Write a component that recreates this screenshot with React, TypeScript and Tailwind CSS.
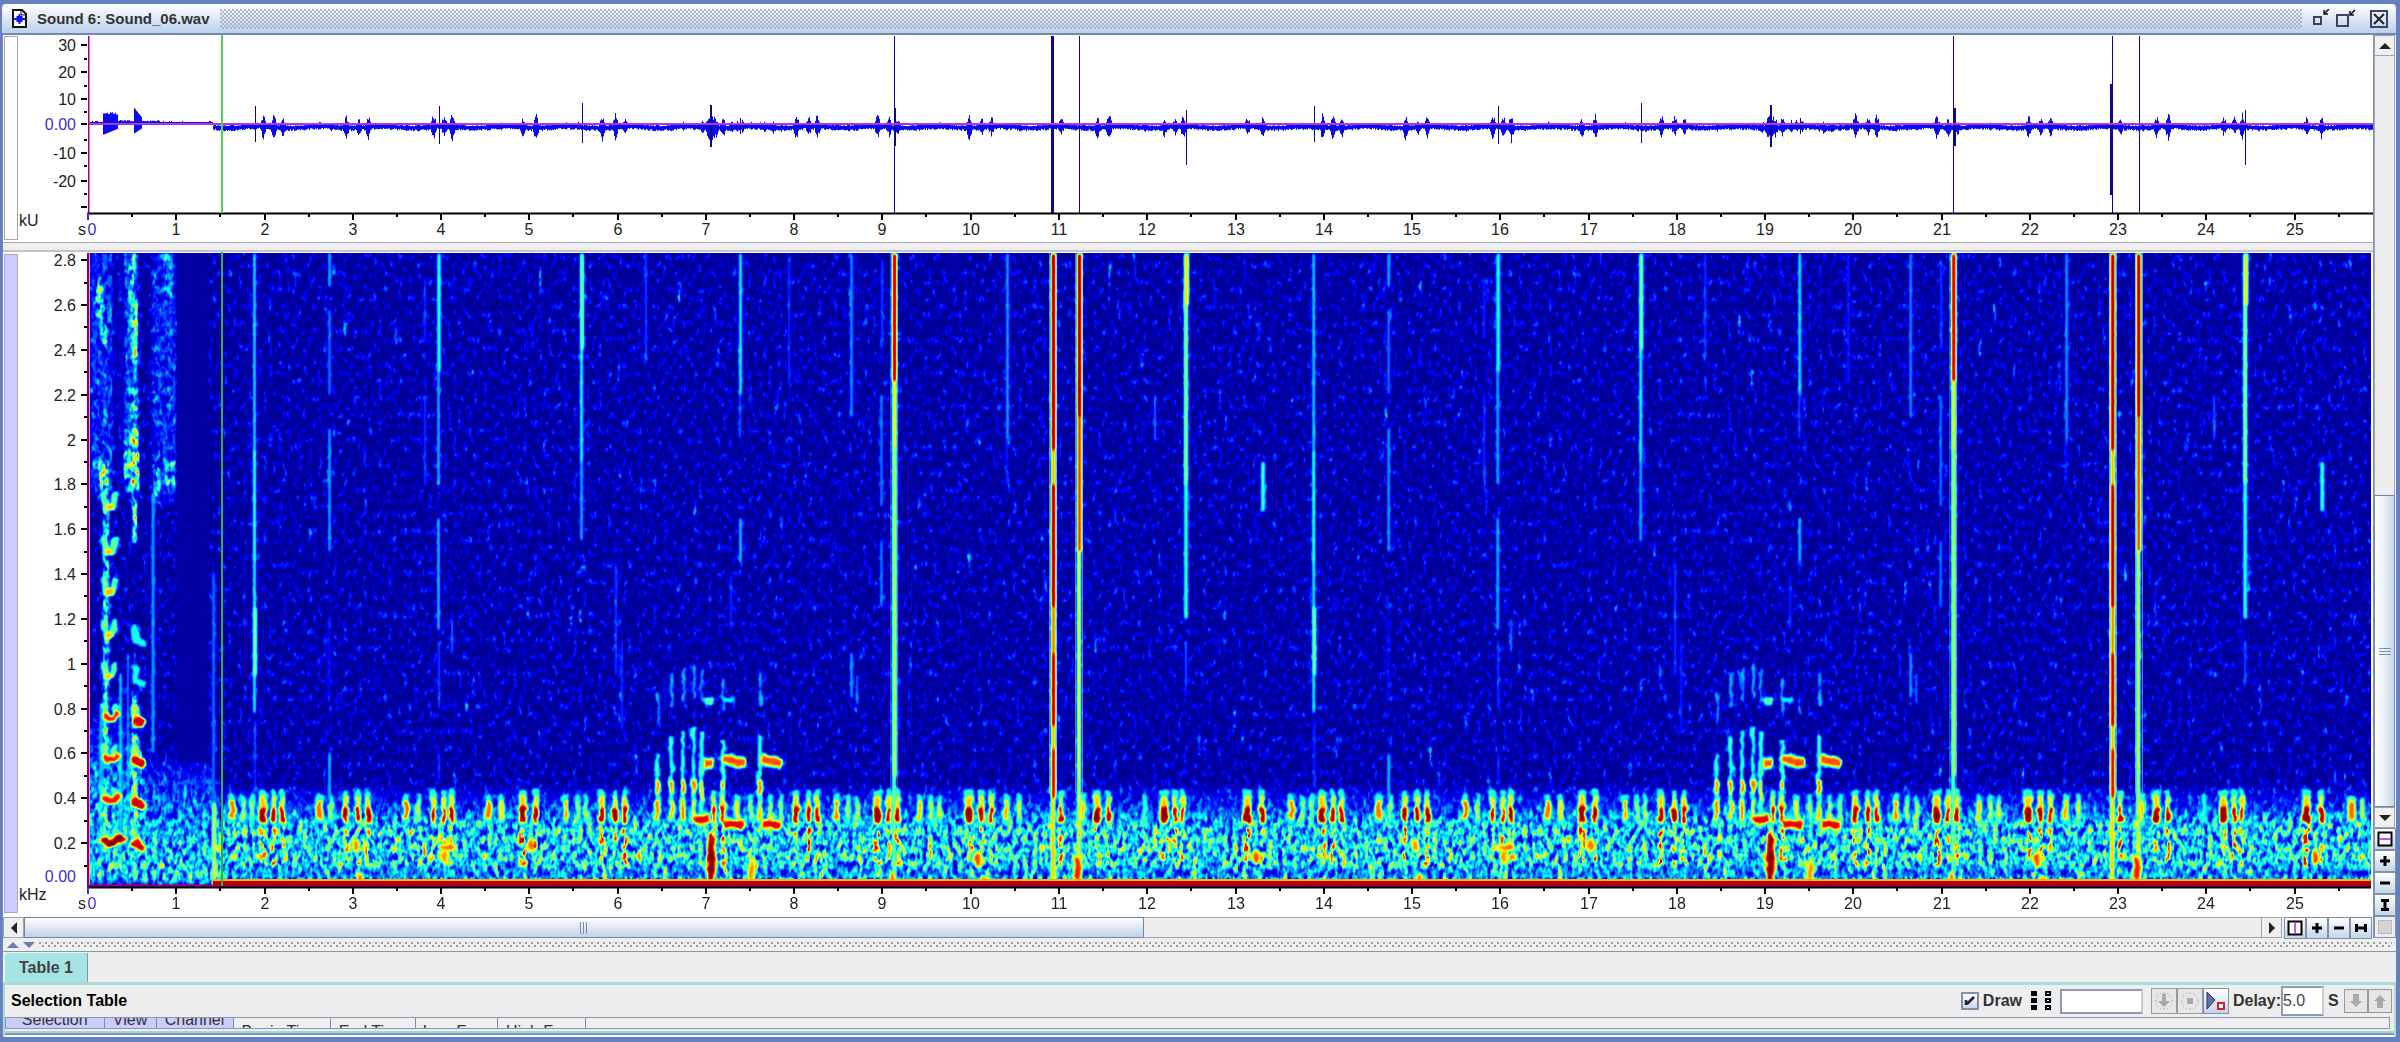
import { ReactNode } from 'react'

// one second of sound is 88.27px wide, one kHz is 224.25px high
const SECOND = 88.27
const KHZ = 224.25
const PLOT_H = 634
const LOOP = 12

const tx = (s: number) => 1 + s * SECOND
const fy = (k: number) => PLOT_H + 1 - k * KHZ
const gray = (v: number) => {
  const c = Math.round(v * 255)
  return `rgb(${c},${c},${c})`
}

const makeRandom = (seed: number) => () => {
  seed = (seed + 0x6d2b79f5) | 0
  let t = Math.imul(seed ^ (seed >>> 15), 1 | seed)
  t = (t + Math.imul(t ^ (t >>> 7), 61 | t)) ^ t
  return ((t ^ (t >>> 14)) >>> 0) / 4294967296
}

// loud calls: [time, width]
const calls = [
  [1.97, 7], [2.09, 4], [2.19, 4],
  [2.91, 4], [3.05, 4], [3.16, 4],
  [3.9, 4], [4.02, 4], [4.11, 4],
  [4.91, 7], [5.06, 4],
  [5.81, 5], [5.96, 4], [6.07, 4],
  [7.08, 4], [7.18, 4],
  [8.01, 6], [8.15, 4], [8.25, 4],
  [8.93, 7], [9.06, 4], [9.16, 4],
  [9.97, 7], [10.11, 4], [10.22, 4],
  [11.01, 4], [11.42, 6], [11.55, 4],
  [12.18, 7], [12.3, 4], [12.39, 4],
  [13.12, 7], [13.29, 4],
]

// softer calls: [time, width, level]
const softCalls = [
  [1.62, 6, 0.76], [1.75, 3, 0.62], [1.85, 3, 0.55],
  [2.61, 7, 0.76], [2.74, 3, 0.6],
  [3.595, 5, 0.8], [3.73, 3, 0.62],
  [4.53, 6, 0.76], [4.67, 4, 0.66],
  [5.4, 5, 0.76], [5.54, 3, 0.62], [5.63, 3, 0.62],
  [6.44, 4, 0.76], [6.6, 4, 0.76], [6.73, 4, 0.78], [6.85, 4, 0.76],
  [7.34, 4, 0.66], [7.5, 3, 0.58], [7.6, 4, 0.7], [7.72, 3, 0.64], [7.84, 4, 0.58],
  [8.47, 5, 0.76], [8.6, 3, 0.66], [8.7, 3, 0.66],
  [9.41, 5, 0.72], [9.54, 3, 0.64], [9.64, 3, 0.64],
  [10.39, 5, 0.72], [10.54, 3, 0.64],
  [11.26, 5, 0.7], [11.96, 3, 0.45],
]

// clicks: [time, high kHz, low kHz, width, level]
const clicks = [
  [1.88, 2.83, 1.95, 3, 0.38], [1.88, 1.95, 1.45, 3, 0.48], [1.88, 1.45, 1.2, 3, 0.42], [1.88, 1.25, 0.95, 4, 0.54], [1.88, 0.95, 0.78, 3, 0.42], [1.88, 0.75, 0.45, 2, 0.24],
  [2.72, 2.83, 2.68, 3, 0.34], [2.72, 2.58, 2.2, 3, 0.28], [2.72, 2.05, 1.5, 3, 0.32], [2.72, 1.2, 0.85, 2, 0.2], [2.72, 0.6, 0.4, 3, 0.36],
  [3.81, 2.72, 2.45, 2, 0.24], [3.81, 2.2, 1.8, 2, 0.26],
  [3.96, 2.83, 2.3, 4, 0.42], [3.96, 2.3, 1.8, 3, 0.34], [3.96, 1.65, 1.15, 3, 0.35], [3.96, 1.1, 0.8, 2, 0.28], [3.96, 0.6, 0.48, 2, 0.25],
  [4.11, 1.2, 1.05, 2, 0.32],
  [5.58, 2.83, 2.4, 4, 0.54], [5.58, 2.4, 1.9, 3, 0.44], [5.58, 1.9, 1.55, 3, 0.34],
  [6.31, 2.83, 2.35, 2, 0.27], [5.97, 1.45, 0.95, 2, 0.27], [6.04, 1.1, 0.7, 2, 0.24],
  [7.38, 2.83, 2.2, 3, 0.42], [7.38, 2.2, 2.0, 2, 0.28], [7.38, 1.65, 1.45, 3, 0.36],
  [7.27, 1.4, 1.15, 2, 0.24], [7.93, 2.83, 2.25, 2, 0.24],
  [8.64, 2.83, 2.1, 3, 0.3], [8.98, 2.8, 2.4, 2, 0.28], [8.98, 2.2, 1.7, 3, 0.28], [8.98, 1.55, 1.25, 3, 0.28],
  [8.64, 1.05, 0.85, 3, 0.32], [8.7, 0.95, 0.82, 2, 0.32],
  [9.12, 2.83, 2.26, 5, 0.94], [9.12, 2.26, 1.95, 5, 0.62], [9.12, 1.95, 0.5, 5, 0.56], [9.12, 0.5, 0.04, 4, 0.5],
  [10.4, 2.83, 2.0, 3, 0.32], [10.4, 2.0, 1.8, 2, 0.22],
  [10.925, 2.83, 1.95, 5, 0.97], [10.925, 1.95, 1.8, 5, 0.7], [10.925, 1.8, 1.25, 5, 0.97], [10.925, 1.25, 1.05, 5, 0.76],
  [10.925, 1.05, 0.72, 5, 0.94], [10.925, 0.72, 0.62, 5, 0.7], [10.925, 0.62, 0.4, 5, 0.9], [10.925, 0.4, 0.04, 4, 0.7],
  [11.22, 2.83, 2.1, 5, 0.96], [11.22, 2.1, 1.5, 5, 0.82], [11.22, 1.5, 0.5, 4, 0.64], [11.22, 0.5, 0.04, 4, 0.6],
  [12.43, 2.83, 2.6, 5, 0.66], [12.43, 2.6, 1.8, 4, 0.56], [12.43, 1.8, 1.2, 4, 0.44], [12.43, 1.1, 0.9, 2, 0.3],
  [13.3, 1.9, 1.68, 4, 0.46], [12.08, 2.2, 2.0, 2, 0.32],
]

// cyan columns rising around the seventh second
const columns = [
  [6.44, 0.6], [6.6, 0.68], [6.73, 0.7], [6.85, 0.72], [6.94, 0.7], [7.18, 0.66], [7.6, 0.68],
]

// song notes: [from, to, kHz, slope]
const notes = [
  [6.86, 7.03, 0.3, -3], [7.18, 7.42, 0.285, 1], [7.62, 7.84, 0.285, 1],
  [6.97, 7.07, 0.555, 0], [7.19, 7.43, 0.575, 4], [7.62, 7.85, 0.575, 5],
]

// rumbles near the floor: [time, kHz, width, height, level]
const rumbles = [
  [3.07, 0.04, 5, 10, 0.8], [4.06, 0.185, 14, 5, 0.78], [4.04, 0.14, 4, 12, 0.74],
  [5.01, 0.19, 5, 10, 0.76], [7.5, 0.08, 4, 22, 0.74], [7.05, 0.12, 7, 60, 1],
  [9.1, 0.04, 4, 10, 0.78], [10.07, 0.13, 5, 12, 0.82], [11.2, 0.08, 6, 30, 0.86],
  [10.15, 0.03, 8, 8, 0.72], [13.22, 0.14, 4, 14, 0.82], [3.02, 0.19, 4, 10, 0.74],
]

const rounds = [0, 1]

const Grain = () => {
  const rand = makeRandom(11)
  const streaks = Array.from({ length: 300 }, () => ({
    t: 1.42 + rand() * 25,
    k: 0.08 + rand() * 0.2,
    h: 8 + rand() * 22,
    v: 0.38 + rand() * 0.14,
  }))
  const flecks = Array.from({ length: 700 }, () => ({
    t: 1.5 + rand() * 25,
    k: 0.4 + rand() * 2.45,
    h: 5 + rand() * 18,
    v: 0.08 + rand() * 0.18,
  }))

  return (
    <g filter="url(#grain)">
      <rect width="100%" height={PLOT_H} fill="black" />
      <rect x={tx(1.42)} y={fy(0.46)} width="100%" height={fy(0) - fy(0.46)} fill="url(#band)" />
      <rect y={fy(0.8)} width={tx(0.6)} height={fy(0) - fy(0.8)} fill="url(#voice)" />
      <rect x={tx(0.6)} y={fy(0.6)} width={0.8 * SECOND} height={fy(0) - fy(0.6)} fill="url(#voice)" />
      <g filter="url(#soft)">
        {flecks.map((f, i) => (
          <rect key={i} x={tx(f.t)} y={fy(f.k)} width={2} height={f.h} fill={gray(f.v)} />
        ))}
        {streaks.map((s, i) => (
          <rect key={i} x={tx(s.t)} y={fy(s.k)} width={3} height={s.h} fill={gray(s.v)} />
        ))}
        {rounds.map((r) =>
          calls.map(([t, w], i) => (
            <rect
              key={`${r}-${i}`}
              x={tx(t + r * LOOP) - w / 2}
              y={fy(0.27)}
              width={w}
              height={38}
              fill={gray(i % 2 ? 0.64 : 0.52)}
            />
          )),
        )}
        {/* breathy parts of the opening voice */}
        <rect x={3} y={0} width={22} height={240} fill={gray(0.14)} />
        <rect x={36} y={0} width={14} height={240} fill={gray(0.18)} />
        <rect x={8} y={30} width={7} height={34} fill={gray(0.38)} />
        <rect x={13} y={50} width={6} height={40} fill={gray(0.36)} />
        <rect x={12} y={208} width={8} height={30} fill={gray(0.5)} />
        <rect x={5} y={208} width={8} height={8} fill={gray(0.4)} />
        <rect x={41} y={0} width={6} height={50} fill={gray(0.4)} />
        <rect x={44} y={45} width={6} height={65} fill={gray(0.5)} />
        <rect x={44} y={135} width={6} height={30} fill={gray(0.38)} />
        <rect x={42} y={176} width={9} height={62} fill={gray(0.58)} />
        <rect x={36} y={190} width={9} height={36} fill={gray(0.4)} />
        <rect x={44} y={240} width={5} height={50} fill={gray(0.42)} />
        <rect x={64} y={0} width={24} height={250} fill={gray(0.14)} />
        <rect x={78} y={0} width={7} height={50} fill={gray(0.26)} />
        <rect x={66} y={210} width={6} height={40} fill={gray(0.34)} />
        <rect x={78} y={208} width={8} height={26} fill={gray(0.38)} />
        <rect x={15} y={240} width={6} height={370} fill={gray(0.36)} />
        <rect x={44} y={440} width={5} height={160} fill={gray(0.48)} />
      </g>
    </g>
  )
}

const Round = ({ start }: { start: number }) => (
  <g transform={`translate(${start * SECOND} 0)`}>
    <g filter="url(#rough)" className="mix-blend-lighten">
      {columns.map(([t, k]) => (
        <g key={t}>
          <rect x={tx(t) - 2} y={fy(k)} width={4} height={fy(0.3) - fy(k)} fill={gray(0.46)} />
          <rect x={tx(t) - 1} y={fy(k + 0.28)} width={3} height={34} fill={gray(0.34)} />
          <rect x={tx(t) - 2} y={fy(0.48)} width={4} height={20} fill={gray(0.76)} />
        </g>
      ))}
      {softCalls.map(([t, w, v]) => (
        <g key={t}>
          <rect x={tx(t) - w / 2 - 1} y={fy(0.42)} width={w + 2} height={30} rx={3} fill={gray(0.42)} />
          <rect x={tx(t) - w / 2} y={fy(0.39)} width={w} height={19} rx={2} fill={gray(v)} />
        </g>
      ))}
      {calls.map(([t, w]) => (
        <g key={t}>
          <rect x={tx(t) - w / 2 - 1} y={fy(0.44)} width={w + 2} height={36} rx={3} fill={gray(0.43)} />
          <rect x={tx(t) - w / 2} y={fy(0.41)} width={w} height={27} rx={2} fill={gray(0.68)} />
          <rect x={tx(t) - w / 2} y={fy(0.36)} width={w} height={15} rx={2} fill={gray(1)} />
        </g>
      ))}
      {notes.map(([a, b, k, slope]) => (
        <g key={`${a}-${k}`}>
          <path d={`M${tx(a)} ${fy(k)}L${tx(b)} ${fy(k) + slope}`} stroke={gray(0.5)} strokeWidth={12} />
          <path d={`M${tx(a)} ${fy(k)}L${tx(b)} ${fy(k) + slope}`} stroke={gray(k > 0.5 ? 0.8 : 0.9)} strokeWidth={7} />
        </g>
      ))}
      <rect x={tx(6.97)} y={fy(0.85)} width={9} height={8} fill={gray(0.48)} />
      <rect x={tx(7.18)} y={fy(0.85)} width={12} height={5} fill={gray(0.38)} />
      {rumbles.map(([t, k, w, h, v]) => (
        <g key={`${t}-${k}`}>
          <ellipse cx={tx(t)} cy={fy(k)} rx={w / 2 + 2} ry={h / 2 + 2} fill={gray(0.6)} />
          <ellipse cx={tx(t)} cy={fy(k)} rx={w / 2} ry={h / 2} fill={gray(v)} />
        </g>
      ))}
    </g>
    <g filter="url(#soft)" className="mix-blend-lighten">
      {clicks.map(([t, hi, lo, w, v], i) => (
        <rect
          key={i}
          x={Math.round(tx(t) - w / 2)}
          y={fy(hi)}
          width={w}
          height={fy(lo) - fy(hi)}
          fill={gray(v)}
        />
      ))}
    </g>
  </g>
)

const voiceA = [0.2, 0.385, 0.57, 0.755, 0.94, 1.13, 1.32, 1.5, 1.7]
const voiceB = [0.19, 0.375, 0.56, 0.74, 0.92, 1.1]

const Spectrogram = () => (
  <svg x={70} y={1} width="100%" height={PLOT_H}>
    <defs>
      <linearGradient id="band" x1="0" y1="0" x2="0" y2="1">
        <stop offset="0" stopColor={gray(0.02)} />
        <stop offset="0.2" stopColor={gray(0.14)} />
        <stop offset="0.4" stopColor={gray(0.34)} />
        <stop offset="0.75" stopColor={gray(0.36)} />
        <stop offset="0.86" stopColor={gray(0.22)} />
        <stop offset="0.93" stopColor={gray(0.34)} />
        <stop offset="1" stopColor={gray(0.5)} />
      </linearGradient>
      <linearGradient id="voice" x1="0" y1="0" x2="0" y2="1">
        <stop offset="0" stopColor={gray(0.02)} />
        <stop offset="0.25" stopColor={gray(0.17)} />
        <stop offset="0.7" stopColor={gray(0.33)} />
        <stop offset="0.93" stopColor={gray(0.36)} />
        <stop offset="1" stopColor={gray(0.05)} />
      </linearGradient>
      <filter id="grain" filterUnits="userSpaceOnUse" x="0" y="0" width="100%" height={PLOT_H} colorInterpolationFilters="sRGB">
        <feTurbulence type="fractalNoise" baseFrequency="0.2 0.12" numOctaves="2" seed="4" result="turbulence" />
        <feColorMatrix values="2.6 0 0 0 -0.8  2.6 0 0 0 -0.8  2.6 0 0 0 -0.8  0 0 0 0 1" result="dense" />
        <feColorMatrix in="turbulence" values="0 2.8 0 0 -1.4  0 2.8 0 0 -1.4  0 2.8 0 0 -1.4  0 0 0 0 1" result="sparse" />
        <feComposite in="SourceGraphic" in2="dense" operator="arithmetic" k1="1.15" k2="0.24" k3="0" k4="0" result="body" />
        <feComposite in="body" in2="sparse" operator="arithmetic" k1="0" k2="1" k3="0.2" k4="0.02" />
      </filter>
      <filter id="rough" filterUnits="userSpaceOnUse" x="0" y="0" width={1400} height={PLOT_H} colorInterpolationFilters="sRGB">
        <feTurbulence type="fractalNoise" baseFrequency="0.15 0.1" numOctaves="2" seed="9" result="n" />
        <feDisplacementMap in="SourceGraphic" in2="n" scale="6" xChannelSelector="R" yChannelSelector="G" />
        <feGaussianBlur stdDeviation="1" />
      </filter>
      <filter id="soft" filterUnits="userSpaceOnUse" x="0" y="0" width="100%" height={PLOT_H} colorInterpolationFilters="sRGB">
        <feGaussianBlur stdDeviation="0.8 1.6" />
      </filter>
      {/* level to colour: navy, blue, cyan, yellow, red, maroon */}
      <filter id="jet" filterUnits="userSpaceOnUse" x="0" y="0" width="100%" height={PLOT_H} colorInterpolationFilters="sRGB">
        <feComponentTransfer>
          <feFuncR type="table" tableValues="0 0 0 0 0.5 1 1 1 0.5" />
          <feFuncG type="table" tableValues="0 0 0.5 1 1 1 0.5 0 0" />
          <feFuncB type="table" tableValues="0.52 1 1 1 0.5 0 0 0 0" />
        </feComponentTransfer>
      </filter>
    </defs>

    <g filter="url(#jet)">
      <Grain />
      {/* silence between the voice and the chorus */}
      <rect x={tx(1)} y={0} width={0.35 * SECOND} height={fy(0.56)} fill={gray(0.03)} />
      <g filter="url(#soft)" className="mix-blend-lighten">
        <rect x={tx(0.72) - 1} y={240} width={3} height={260} fill={gray(0.34)} />
        <rect x={tx(0.34)} y={0} width={1} height={240} fill={gray(0.18)} />
        <rect x={tx(0.34)} y={420} width={3} height={180} fill={gray(0.36)} />
        <rect x={tx(0.43)} y={400} width={2} height={200} fill={gray(0.34)} />
        <rect x={tx(0.12)} y={450} width={3} height={160} fill={gray(0.36)} />
        <rect x={tx(1.395)} y={320} width={3} height={230} fill={gray(0.28)} />
        <rect x={tx(1.395)} y={550} width={4} height={84} fill={gray(0.6)} />
      </g>
      <g filter="url(#rough)" className="mix-blend-lighten" fill="none" strokeLinecap="round" strokeLinejoin="round">
        {voiceA.map((k, i) => (
          <g key={k}>
            <path d={`M${16} ${fy(k) - 13}L${18} ${fy(k)}L${25} ${fy(k)}L${27} ${fy(k) - 12}`} stroke={gray(0.48)} strokeWidth={6} />
            <path
              d={i < 4 ? `M17 ${fy(k) - 3}L20 ${fy(k)}L26 ${fy(k) - 1}L${i === 0 ? 33 : 29} ${fy(k) - 5}` : `M20 ${fy(k)}L23 ${fy(k)}`}
              stroke={gray(i === 0 ? 1 : i < 4 ? 0.86 : 0.7)}
              strokeWidth={i === 0 ? 8 : 6}
            />
          </g>
        ))}
        {voiceB.map((k, i) => (
          <g key={k}>
            <path d={`M47 ${fy(k) - 14}L48 ${fy(k)}L55 ${fy(k) + 2}`} stroke={gray(i < 4 ? 0.54 : 0.4)} strokeWidth={7} />
            {i < 4 && <path d={`M48 ${fy(k) - 2}L53 ${fy(k) + 1}`} stroke={gray(0.92)} strokeWidth={8} />}
          </g>
        ))}
      </g>
      {rounds.map((r) => (
        <Round key={r} start={r * LOOP} />
      ))}
      {/* the two soft calls that open a third round */}
      <g filter="url(#soft)">
        <rect x={tx(25.58)} y={fy(0.41)} width={9} height={26} rx={3} fill={gray(0.5)} />
        <rect x={tx(25.6)} y={fy(0.385)} width={6} height={18} rx={2} fill={gray(0.78)} />
        <rect x={tx(25.73)} y={fy(0.4)} width={4} height={22} rx={2} fill={gray(0.62)} />
      </g>
      <rect x={tx(1.4)} y={626} width="100%" height={3} fill={gray(0.7)} />
      <rect x={tx(1.4)} y={628} width="100%" height={6} fill={gray(0.95)} />
    </g>

    {[9.12, 10.925, 11.22, 21.12, 22.925, 23.22].map((t) => (
      <path
        key={t}
        d={`M${Math.round(tx(t)) - 3.5} 0V540M${Math.round(tx(t)) + 3.5} 0V540`}
        stroke="#e8e2d0"
        strokeOpacity={t % LOOP < 10 ? 0.25 : 0.5}
      />
    ))}
    <path d="M0.5 0V634" stroke="#e2a0e0" strokeWidth={3} />
    <path d="M0 632.5H4000" stroke="#a8005a" strokeWidth={2} />
  </svg>
)

const Waveform = () => {
  const rand = makeRandom(5)
  const bursts = [
    ...calls.map(([t]) => [t, 8 + 6 * rand()]),
    ...softCalls.map(([t]) => [t, 4]),
    [6.95, 7], [7.02, 14], [7.05, 13], [7.1, 9], [7.28, 6], [7.34, 6], [7.4, 6], [7.65, 6], [7.75, 6],
  ]
  const d: string[] = []
  for (let x = 2; x < 2400; x++) {
    const t = (x - 1) / SECOND
    let up = 1.5 + rand()
    let down = 1.5 + rand() * 2
    let mid = 91
    if (t < 1.4) {
      mid = 87
      if (t > 0.15 && t < 0.32) {
        up = 8 + rand() * 3
        down = 12 - (t - 0.15) * 36
      } else if (t > 0.5 && t < 0.6) {
        up = 16 - (t - 0.5) * 110
        down = 11 - (t - 0.5) * 60
      } else if (t > 0.32 && t < 0.8) {
        up = 1.5 + rand() * 1.5
        down = 2
      } else {
        up = rand() > 0.8 ? 2 : 1
        down = 1
      }
    } else {
      mid += Math.sin(t * 9) * 0.8
      const local = t >= 13.4 ? t - LOOP : t
      for (const [bt, amp] of bursts) {
        const near = Math.max(0, 1 - Math.abs(local - bt) / 0.045)
        up = Math.max(up, near * amp * (0.6 + rand() * 0.6))
        down = Math.max(down, near * amp * (0.6 + rand() * 0.6))
      }
    }
    d.push(`M${x + 0.5} ${(mid - up).toFixed(1)}V${(mid + down).toFixed(1)}`)
  }

  // [time, top, bottom, width]
  const spikes = [
    [1.88, 70, 106, 1], [3.96, 70, 108, 1], [5.58, 67, 107, 1], [7.38, 82, 98, 1], [7.05, 69, 111, 2],
    [9.12, 0, 178, 1], [9.135, 72, 110, 2], [11.22, 0, 178, 1], [12.43, 74, 129, 1],
    [13.88, 70, 106, 1], [15.96, 70, 108, 1], [17.58, 67, 107, 1], [19.38, 82, 98, 1], [19.05, 69, 111, 2],
    [21.12, 0, 178, 1], [21.135, 72, 110, 2], [23.22, 0, 178, 1], [24.43, 74, 129, 1],
    [10.915, 0, 178, 3], [22.91, 48, 159, 3], [22.92, 0, 178, 1],
  ]

  return (
    <svg x={70} y={1} width="100%" height={178}>
      <path d={d.join('')} stroke="#0a0af0" />
      {spikes.map(([t, top, bottom, w], i) => (
        <path
          key={i}
          d={`M${Math.round(tx(t)) + (w === 2 ? 0 : 0.5)} ${top}V${bottom}`}
          stroke="#0c0890"
          strokeWidth={w}
        />
      ))}
      <path d="M0 87.5H4000" stroke="#c040b8" />
      <path d="M0 88.5H4000" stroke="#a030f0" />
      <path d="M0 0V178" stroke="#a00080" strokeWidth={3} />
    </svg>
  )
}

const TimeAxis = ({ y }: { y: number }) => (
  <g>
    <path d={`M69 ${y + 0.5}H4000`} stroke="black" strokeWidth={2} />
    {Array.from({ length: 26 }, (_, s) => {
      const x = Math.round(70 + s * SECOND)
      return (
        <g key={s}>
          <path d={`M${x} ${y}v7`} stroke={s ? 'black' : '#3a2fd0'} strokeWidth={2} />
          <path d={`M${x + 44} ${y}v4`} stroke="black" strokeWidth={2} />
          <text x={s ? x : x + 4} y={y + 22} textAnchor="middle" fill={s ? '#222' : '#3a2fd0'}>
            {s}
          </text>
        </g>
      )
    })}
    <text x={64} y={y + 22} textAnchor="middle" fill="#222">
      s
    </text>
  </g>
)

const ValueAxis = ({ marks }: { marks: { label: string; y: number }[] }) => (
  <g>
    {marks.map(({ label, y }) => (
      <g key={label}>
        <path d={`M63 ${y}h6`} stroke="black" strokeWidth={2} />
        <text x={58} y={y + 6} textAnchor="end" fill={label === '0.00' ? '#3a2fd0' : '#222'}>
          {label}
        </text>
      </g>
    ))}
  </g>
)

const levelMarks = [
  { label: '30', y: 10 },
  { label: '20', y: 37 },
  { label: '10', y: 64 },
  { label: '0.00', y: 89 },
  { label: '-10', y: 118 },
  { label: '-20', y: 146 },
]

const kiloMarks = Array.from({ length: 14 }, (_, i) => {
  const k = (i + 1) / 5
  return { label: String(k), y: Math.round(fy(k) + 1) }
})

const BarButton = ({ label, children }: { label: string; children: ReactNode }) => (
  <button
    type="button"
    aria-label={label}
    className="flex size-[22px] shrink-0 items-center justify-center border border-[#7f90ab] bg-linear-to-b from-white to-[#c3d5e9]"
  >
    <svg width="18" height="18" viewBox="0 0 18 18" fill="none" stroke="black" strokeWidth="3">
      {children}
    </svg>
  </button>
)

const ArrowButton = ({ label, d }: { label: string; d: string }) => (
  <button type="button" aria-label={label} className="flex size-[21px] shrink-0 items-center justify-center border border-[#9aa3b0] bg-[#f0f0f0]">
    <svg width="12" height="12" viewBox="0 0 12 12" fill="#222">
      <path d={d} />
    </svg>
  </button>
)

const TitleBar = () => (
  <header className="flex h-[29px] items-center gap-2.5 rounded-t bg-linear-to-b from-white to-[#bcd0ee] pr-2 pl-2.5">
    <svg width="15" height="19" viewBox="0 0 15 19">
      <path d="M1 1h9l4 4v13H1z" fill="white" stroke="#111" strokeWidth="2" />
      <path d="M9 1v5h5" fill="none" stroke="#111" />
      <path d="M2 10h11M7.5 5v10M5.500 7v6M9.500 7v6M3.500 9v2M11.500 9v2" stroke="#0a14ee" strokeWidth="2" />
    </svg>
    <h1 className="text-[15px] leading-5 font-bold whitespace-nowrap text-[#333]">Sound 6: Sound_06.wav</h1>
    <div className="h-5 flex-1 bg-[radial-gradient(circle_at_1px_1px,#a8b3c4_0.7px,transparent_1px),radial-gradient(circle_at_3px_3px,#a8b3c4_0.7px,transparent_1px)] bg-size-[4px_4px]" />
    <button type="button" aria-label="Minimize">
      <svg width="18" height="20" viewBox="0 0 18 20" fill="none">
        <rect x="2" y="8" width="7" height="7" stroke="#3b4560" strokeWidth="2" />
        <path d="M17 0l-5 5M12 1v4h4" stroke="#111" strokeWidth="1.500" />
      </svg>
    </button>
    <button type="button" aria-label="Maximize" className="-ml-1">
      <svg width="20" height="20" viewBox="0 0 20 20" fill="none">
        <rect x="1" y="6" width="11" height="11" stroke="#3b4560" strokeWidth="2" />
        <path d="M19 1l-5 5M14 2v4h4" stroke="#111" strokeWidth="1.500" />
      </svg>
    </button>
    <button type="button" aria-label="Close" className="ml-1">
      <svg width="18" height="18" viewBox="0 0 18 18" fill="none">
        <rect x="1" y="1" width="16" height="16" stroke="#3b4560" strokeWidth="2" />
        <path d="M4 4l10 10M14 4L4 14" stroke="#222" strokeWidth="2" />
      </svg>
    </button>
  </header>
)

const WaveformRow = () => (
  <div className="flex h-[207px] bg-white">
    <div className="mt-px mb-0.5 ml-px w-3.5 border border-[#a9a9a9]" />
    <svg className="h-full min-w-0 flex-1 text-base" fontFamily="Liberation Sans, Arial, sans-serif" role="img" aria-label="Waveform">
      <ValueAxis marks={levelMarks} />
      {[24, 51, 77, 105, 131, 159].map((y) => (
        <path key={y} d={`M66 ${y}h3`} stroke="black" strokeWidth={2} />
      ))}
      <path d="M63 172h6" stroke="black" strokeWidth={2} />
      <text x={1} y={191} fill="#222">
        kU
      </text>
      <Waveform />
      <TimeAxis y={178} />
      <path d="M204 0V178" stroke="#4fd04f" strokeWidth={2} />
    </svg>
  </div>
)

const SpectrogramRow = () => (
  <div className="flex h-[665px] bg-white pr-0.5">
    <div className="mt-0.5 mb-1 ml-px w-3.5 border border-[#a9a9c0] bg-[#ccccff]" />
    <svg className="h-full min-w-0 flex-1 text-base" fontFamily="Liberation Sans, Arial, sans-serif" role="img" aria-label="Spectrogram">
      <ValueAxis marks={kiloMarks} />
      {Array.from({ length: 14 }, (_, i) => (
        <path key={i} d={`M66 ${Math.round(fy(0.1 + i / 5) + 1)}h3`} stroke="black" strokeWidth={2} />
      ))}
      <text x={58} y={630} textAnchor="end" fill="#3a2fd0">
        0.00
      </text>
      <text x={1} y={648} fill="#222">
        kHz
      </text>
      <Spectrogram />
      <path d="M70 1V635" stroke="#8b0060" strokeWidth={2} />
      <TimeAxis y={635} />
      <path d="M204 0V634" stroke="#35b035" strokeWidth={2} />
    </svg>
  </div>
)

const TimeScroll = () => (
  <div className="flex h-[21px] bg-[#eee]">
    <ArrowButton label="Scroll left" d="M9 0v12L3 6z" />
    <div className="flex flex-1 items-center justify-center border border-[#6f86b2] bg-linear-to-b from-white to-[#bfd3e6]">
      <span className="h-3 w-[7px] border-x border-[#7a8dab] bg-[linear-gradient(to_right,transparent_2px,#7a8dab_2px,#7a8dab_3px,transparent_3px)]" />
    </div>
    <div className="flex-1 border-y border-[#9aa3b0]" />
    <ArrowButton label="Scroll right" d="M3 0v12l6-6z" />
    <div className="ml-0.5 mr-px flex">
      <BarButton label="Zoom to view in time">
        <path d="M2.500 2.500h13v13h-13z" strokeWidth="2" fill="white" />
        <path d="M9 3v12" stroke="#d050d0" strokeWidth="2" />
      </BarButton>
      <BarButton label="Zoom in in time">
        <path d="M9 4v10M4 9h10" />
      </BarButton>
      <BarButton label="Zoom out in time">
        <path d="M4 9h10" />
      </BarButton>
      <BarButton label="Fit in time">
        <path d="M4 9h10M4.500 5v8M13.500 5v8" />
      </BarButton>
    </div>
  </div>
)

const SideScroll = () => (
  <div className="flex w-[22px] flex-col border-l border-[#8294b5] bg-[#eee]">
    <ArrowButton label="Scroll up" d="M0 9h12L6 3z" />
    <div className="flex-[440] border-x border-[#9aa3b0]" />
    <div className="flex flex-[310] items-center justify-center border border-[#6f86b2] bg-linear-to-r from-white via-[#e8f0f8] to-[#c5d6ea]">
      <span className="h-[7px] w-3 border-y border-[#7a8dab] bg-[linear-gradient(to_bottom,transparent_2px,#7a8dab_2px,#7a8dab_3px,transparent_3px)]" />
    </div>
    <ArrowButton label="Scroll down" d="M0 3h12L6 9z" />
    <BarButton label="Zoom to view in frequency">
      <path d="M2.500 2.500h13v13h-13z" strokeWidth="2" fill="white" />
      <path d="M3 9h12" stroke="#d050d0" strokeWidth="2" />
    </BarButton>
    <BarButton label="Zoom in in frequency">
      <path d="M9 4v10M4 9h10" />
    </BarButton>
    <BarButton label="Zoom out in frequency">
      <path d="M4 9h10" />
    </BarButton>
    <BarButton label="Fit in frequency">
      <path d="M9 5v8M5 4.500h8M5 13.500h8" />
    </BarButton>
    <div className="flex size-[22px] items-center justify-center border border-[#7f90ab] bg-[#eee]">
      <span className="size-3.5 border border-[#bbb] bg-[#d4d4d4]" />
    </div>
  </div>
)

const GrayButton = ({ label, className, children }: { label: string; className: string; children: ReactNode }) => (
  <button type="button" aria-label={label} className={`flex items-center justify-center border border-[#9a9a9a] bg-[#e6e6e6] ${className}`}>
    <svg width="20" height="20" viewBox="0 0 20 20" fill="#a9a9a9">
      {children}
    </svg>
  </button>
)

const rays = 'M1 10h2M17 10h2M10 1v2M10 17v2M3 4l1 1M16 4l-1 1M3 16l1-1M16 16l-1-1M6 2l1 1M14 2l-1 1M6 18l1-1M14 18l-1-1M2 7h1M17 7h1M2 13h1M17 13h1'

const SelectionToolbar = () => (
  <div className="flex h-8 items-center pr-0.5 pl-1.5 text-base font-bold text-[#333]">
    <h2 className="flex-1 text-base text-black">Selection Table</h2>
    <label className="flex items-center gap-1">
      <span className="relative flex size-[18px]">
        <input type="checkbox" defaultChecked className="peer size-full appearance-none border-2 border-[#7f90ab] bg-linear-to-b from-white to-[#c8d8ea]" />
        <svg className="pointer-events-none absolute inset-0 hidden peer-checked:block" width="18" height="18" viewBox="0 0 18 18" fill="none">
          <path d="M5 8v5M6 12l7-7" stroke="#222" strokeWidth="2.500" />
        </svg>
      </span>
      Draw
    </label>
    <svg className="ml-2 bg-linear-to-b from-[#eee] via-[#d8e4f2] to-[#eee]" width="22" height="20" viewBox="0 0 22 20">
      <path d="M1 0h6v5H1zM1 7h6v5H1zM1 14h6v5H1z" fill="black" />
      <path d="M16 1h4v3h-4zM16 8h4v3h-4zM16 15h4v3h-4z" fill="white" stroke="black" strokeWidth="2" />
    </svg>
    <input type="text" aria-label="Selection filter" className="ml-2 h-[25px] w-[83px] border-2 border-[#8f9cae] border-r-[#ccc] bg-white px-1 font-normal" />
    <div className="ml-2 flex">
      <GrayButton label="Save selection" className="size-[26px]">
        <path d="M8 3h4v7h4l-6 6-6-6h4z" />
        <path d={rays} stroke="#b5b5b5" />
      </GrayButton>
      <GrayButton label="Clear selection" className="size-[26px]">
        <path d="M7 7h6v6H7z" />
        <path d={rays} stroke="#b5b5b5" />
      </GrayButton>
      <button type="button" aria-label="Play through selections" className="flex size-[26px] items-center justify-center border border-[#7f90ab] bg-linear-to-b from-white to-[#c3d5e9]">
        <svg width="20" height="20" viewBox="0 0 20 20">
          <path d="M1 1l8 8-8 9z" fill="#6a6ab0" stroke="#33335a" />
          <path d="M12 12h6v6h-6z" fill="white" stroke="#d02030" strokeWidth="2" />
        </svg>
      </button>
    </div>
    <label className="ml-1 flex items-center">
      Delay:
      <input type="text" defaultValue="5.0" className="h-[30px] w-[43px] border-2 border-[#8f9cae] border-r-[#ccc] bg-white font-normal text-[#444]" />
    </label>
    <span className="ml-1 w-3">S</span>
    <div className="ml-1 flex">
      <GrayButton label="Move down" className="size-6">
        <path d="M7 3h6v7h3l-6 6-6-6h3z" />
      </GrayButton>
      <GrayButton label="Move up" className="size-6">
        <path d="M7 17h6v-7h3l-6-6-6 6h3z" />
      </GrayButton>
    </div>
  </div>
)

const headings = [
  { text: 'Selection', cell: 'w-[98px] bg-[#ccccff]', shift: '-mt-2' },
  { text: 'View', cell: 'w-[52px] bg-[#ccccff]', shift: '-mt-2' },
  { text: 'Channel', cell: 'w-[77px] bg-[#ccccff]', shift: '-mt-2' },
  { text: 'Begin Time', cell: 'w-[97px]', shift: 'mt-1' },
  { text: 'End Time', cell: 'w-[85px]', shift: 'mt-1' },
  { text: 'Low Freq', cell: 'w-[82px]', shift: 'mt-1' },
  { text: 'High Freq', cell: 'w-[88px]', shift: 'mt-1' },
]

const SelectionTable = () => (
  <div className="mr-1 h-3 overflow-hidden border border-[#8496b0]">
    <table className="table-fixed border-collapse text-base leading-5 text-[#333]">
      <thead>
        <tr>
          {headings.map(({ text, cell, shift }) => (
            <th key={text} className={`border-r border-[#7f90ab] p-0 font-normal ${cell}`}>
              <div className="h-2.5 overflow-hidden">
                <div className={shift}>{text}</div>
              </div>
            </th>
          ))}
        </tr>
      </thead>
    </table>
  </div>
)

export default function App() {
  return (
    <main className="min-h-screen bg-[#6580be] pt-1 pr-1 pl-0.5 font-['Liberation_Sans',Arial,sans-serif]">
      <TitleBar />
      <div className="border-t-2 border-l border-[#7488b0] bg-[#eee]">
        <div className="flex border-r border-white">
          <div className="min-w-0 flex-1">
            <WaveformRow />
            <div className="h-2.5 border-t border-b-2 border-t-[#a9a9a9] border-b-[#c4c4c4] bg-[#eee]" />
            <SpectrogramRow />
            <TimeScroll />
          </div>
          <SideScroll />
        </div>
        <div className="flex h-3.5 items-center gap-1 border-b border-[#8496b0] pr-1 pl-1">
          <button type="button" aria-label="Hide table">
            <svg width="12" height="6" viewBox="0 0 12 6" fill="#6a7db0">
              <path d="M0 6h12L6 0z" />
            </svg>
          </button>
          <button type="button" aria-label="Show table">
            <svg width="12" height="6" viewBox="0 0 12 6" fill="#6a7db0">
              <path d="M0 0h12L6 6z" />
            </svg>
          </button>
          <div className="h-1.5 flex-1 bg-[radial-gradient(circle_at_1px_1px,#9a9a9a_0.7px,transparent_1px),radial-gradient(circle_at_4px_4px,#9a9a9a_0.7px,transparent_1px)] bg-size-[6px_6px]" />
        </div>
        <div className="flex h-[30px] items-end pl-0.5">
          <button type="button" className="h-[29px] w-[83px] rounded-tl border-r border-[#7f9aa8] bg-[#a6e3e3] text-base font-bold text-[#444]">
            Table 1
          </button>
        </div>
        <section className="border-x-2 border-t-3 border-[#a6dcdc]">
          <SelectionToolbar />
          <SelectionTable />
          <div className="mt-0.5 h-1.5 border-y-2 border-y-[#a6d4dc] border-b-white bg-[#7f9ab8]" />
        </section>
      </div>
    </main>
  )
}
